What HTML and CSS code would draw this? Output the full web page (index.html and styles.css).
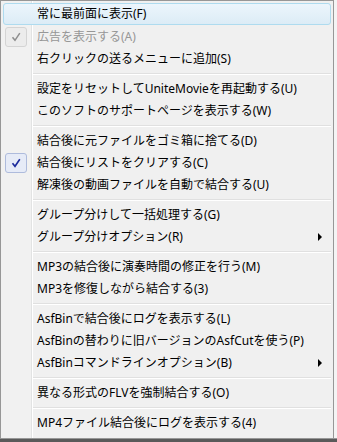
FILE: index.html
```html
<!DOCTYPE html>
<html>
<head>
  <meta charset="utf-8">
  <title>メニュー</title>
  <link rel="stylesheet" href="styles.css">
</head>
<body>
  <div class="menu">
    <div class="item hover"><span class="check"></span><span class="label">常に最前面に表示(F)</span></div>
    <div class="item disabled"><span class="check on"><svg width="10" height="10" viewBox="0 0 10 10"><path d="M1.5 5.2 L4 8.3 L8.8 1.2" fill="none" stroke="#8d8d8d" stroke-width="1.5"/></svg></span><span class="label">広告を表示する(A)</span></div>
    <div class="item"><span class="check"></span><span class="label">右クリックの送るメニューに追加(S)</span></div>
    <div class="sep"></div>
    <div class="item"><span class="check"></span><span class="label">設定をリセットしてUniteMovieを再起動する(U)</span></div>
    <div class="item"><span class="check"></span><span class="label">このソフトのサポートページを表示する(W)</span></div>
    <div class="sep"></div>
    <div class="item"><span class="check"></span><span class="label">結合後に元ファイルをゴミ箱に捨てる(D)</span></div>
    <div class="item"><span class="check on"><svg width="10" height="10" viewBox="0 0 10 10"><path d="M1.5 5.2 L4 8.3 L8.8 1.2" fill="none" stroke="#1b2a9c" stroke-width="1.6"/></svg></span><span class="label">結合後にリストをクリアする(C)</span></div>
    <div class="item"><span class="check"></span><span class="label">解凍後の動画ファイルを自動で結合する(U)</span></div>
    <div class="sep"></div>
    <div class="item"><span class="check"></span><span class="label">グループ分けして一括処理する(G)</span></div>
    <div class="item"><span class="check"></span><span class="label">グループ分けオプション(R)</span><span class="arrow"></span></div>
    <div class="sep"></div>
    <div class="item"><span class="check"></span><span class="label">MP3の結合後に演奏時間の修正を行う(M)</span></div>
    <div class="item"><span class="check"></span><span class="label">MP3を修復しながら結合する(3)</span></div>
    <div class="sep"></div>
    <div class="item"><span class="check"></span><span class="label">AsfBinで結合後にログを表示する(L)</span></div>
    <div class="item"><span class="check"></span><span class="label">AsfBinの替わりに旧バージョンのAsfCutを使う(P)</span></div>
    <div class="item"><span class="check"></span><span class="label">AsfBinコマンドラインオプション(B)</span><span class="arrow"></span></div>
    <div class="sep"></div>
    <div class="item"><span class="check"></span><span class="label">異なる形式のFLVを強制結合する(O)</span></div>
    <div class="sep"></div>
    <div class="item"><span class="check"></span><span class="label">MP4ファイル結合後にログを表示する(4)</span></div>
  </div>
  <div class="shadow"></div>
</body>
</html>
```

FILE: styles.css
```css
html, body {
  margin: 0;
  height: 100%;
}
body {
  background: #f4f4f4;
  font-family: "Noto Sans", "Noto Sans CJK JP", sans-serif;
  font-size: 12px;
  color: #000;
}
.menu {
  width: 328px;
  padding: 3px 2px 4px;
  border: 1px solid #979797;
  border-bottom: none;
  background: linear-gradient(to right, #f1f1f1 0 30px, #e2e3e3 30px 31px, #fff 31px 32px, #f0f0f0 32px);
}
.item {
  display: grid;
  grid-template-columns: 22px 1fr 20px;
  column-gap: 10px;
  align-items: center;
  height: 22px;
  padding-left: 1px;
  box-sizing: border-box;
  border: 1px solid transparent;
  border-radius: 3px;
}
.item.hover {
  margin-top: -1px;
  margin-bottom: 1px;
  border-color: #aedbef;
  background: linear-gradient(#ecf5fc, #dcecf6);
}
.label {
  grid-column: 2;
  line-height: 20px;
  white-space: nowrap;
}
.check {
  grid-column: 1;
  height: 20px;
}
.check.on {
  display: flex;
  align-items: center;
  justify-content: center;
  box-sizing: border-box;
  border: 1px solid #aebbdc;
  border-radius: 3px;
  background: #e6ebf7;
}
.disabled {
  color: #979797;
}
.disabled .check.on {
  border-color: #d4d4d4;
  background: #ececec;
}
.arrow {
  grid-column: 3;
  justify-self: center;
  width: 0;
  height: 0;
  border-left: 4px solid #000;
  border-top: 4px solid transparent;
  border-bottom: 4px solid transparent;
}
.sep {
  height: 8px;
  margin-left: 30px;
  padding-top: 3px;
  box-sizing: border-box;
}
.sep::before {
  content: "";
  display: block;
  border-top: 1px solid #e0e0e0;
  border-bottom: 1px solid #fff;
}
.shadow {
  height: 6px;
  border-top: 1px solid #979797;
  background: #5a5a5a;
}
```
